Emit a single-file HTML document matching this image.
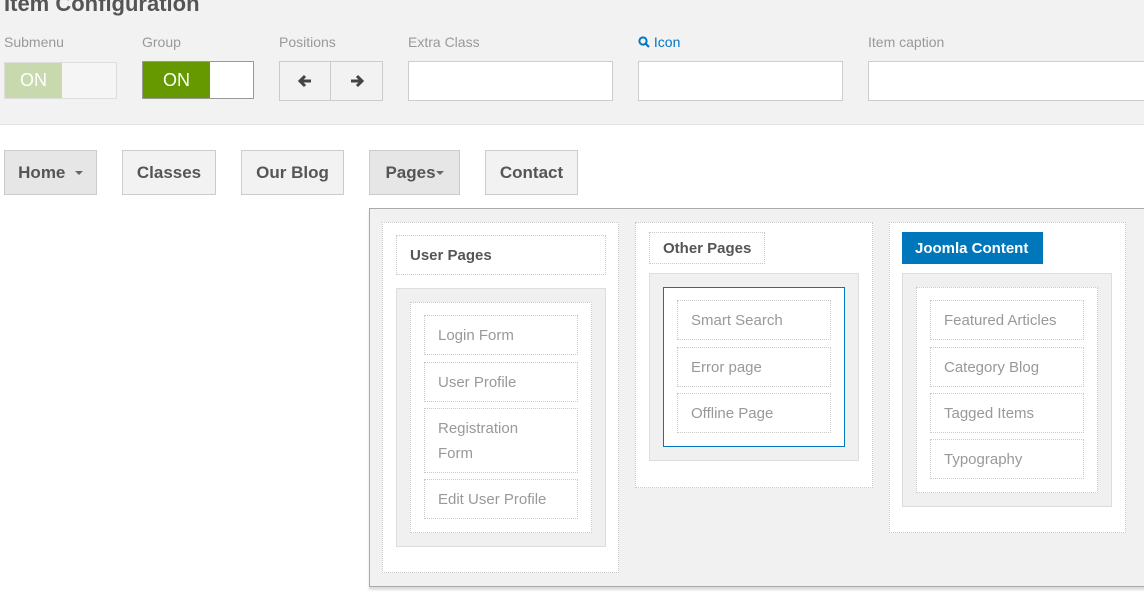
<!DOCTYPE html>
<html><head><style>
*{box-sizing:border-box;margin:0;padding:0}
body{width:1144px;height:612px;overflow:hidden;background:#fff;font-family:"Liberation Sans",Arial,sans-serif;position:relative}
.a{position:absolute}
.top{left:0;top:0;width:1144px;height:125px;background:#f2f2f2;border-bottom:1px solid #e5e5e5}
.lbl{font-size:14px;color:#999;top:34px}
.inp{background:#fff;border:1px solid #ccc;top:61px;height:40px}
.nb{top:150px;height:45px;border:1px solid #ccc;background:#f2f2f2;font-size:17px;font-weight:bold;color:#555;display:flex;align-items:center;justify-content:center}
.dot{border:1px dotted #c8c8c8;background:#fff}
.gray{background:#f0f0f0;border:1px solid #ddd}
.it{font-size:15px;color:#999;padding-left:13px;display:flex;align-items:center;line-height:25px}
.hd{font-size:15px;font-weight:bold;color:#555;padding-left:13px;display:flex;align-items:center}
.car{display:inline-block;width:0;height:0;border-left:4px solid transparent;border-right:4px solid transparent;border-top:4px solid #666;vertical-align:middle}
</style></head><body>
<div class="a top"></div>
<div class="a" style="left:4px;top:-9px;font-size:22px;font-weight:bold;color:#555">Item Configuration</div>
<div class="a lbl" style="left:4px">Submenu</div>
<div class="a lbl" style="left:142px">Group</div>
<div class="a lbl" style="left:279px">Positions</div>
<div class="a lbl" style="left:408px">Extra Class</div>
<div class="a lbl" style="left:638px;color:#0077c0"><svg width="12" height="12" viewBox="0 0 12 12" style="vertical-align:-1px"><circle cx="5" cy="5" r="3.6" fill="none" stroke="#0077c0" stroke-width="2"/><path d="M7.5 7.5L11 11" stroke="#0077c0" stroke-width="2.2"/></svg> Icon</div>
<div class="a lbl" style="left:868px">Item caption</div>
<div class="a" style="left:4px;top:62px;width:113px;height:37px;border:1px solid #ddd;background:#f5f5f5"><div style="width:57px;height:35px;background:#c8d9ad;color:#fff;font-size:18px;display:flex;align-items:center;justify-content:center">ON</div></div>
<div class="a" style="left:142px;top:61px;width:112px;height:38px;border:1px solid #999;background:#fff"><div style="width:67px;height:36px;background:#669900;color:#fff;font-size:18px;display:flex;align-items:center;justify-content:center">ON</div></div>
<div class="a" style="left:279px;top:61px;width:104px;height:40px;border:1px solid #ccc;background:#f2f2f2;display:flex">
<div style="width:51px;border-right:1px solid #ccc;display:flex;align-items:center;justify-content:center"><svg width="16" height="14" viewBox="0 0 16 14"><path d="M14 7H3M8 2L3 7l5 5" fill="none" stroke="#444" stroke-width="3"/></svg></div>
<div style="flex:1;display:flex;align-items:center;justify-content:center"><svg width="16" height="14" viewBox="0 0 16 14"><path d="M2 7h11M8 2l5 5-5 5" fill="none" stroke="#444" stroke-width="3"/></svg></div></div>
<div class="a inp" style="left:408px;width:205px"></div>
<div class="a inp" style="left:638px;width:205px"></div>
<div class="a inp" style="left:868px;width:290px"></div>

<div class="a nb" style="left:4px;width:93px;background:#e6e6e6">Home&nbsp;&nbsp;<span class="car"></span></div>
<div class="a nb" style="left:122px;width:94px">Classes</div>
<div class="a nb" style="left:241px;width:103px">Our Blog</div>
<div class="a nb" style="left:369px;width:91px;background:#e6e6e6">Pages<span class="car"></span></div>
<div class="a nb" style="left:485px;width:93px">Contact</div>

<div class="a" style="left:369px;top:208px;width:790px;height:379px;background:#f1f1f1;border:1px solid #aaa;box-shadow:0 3px 2px #ddd"></div>
<!-- col1 -->
<div class="a dot" style="left:382px;top:222px;width:237px;height:351px"></div>
<div class="a dot hd" style="left:396px;top:235px;width:210px;height:40px">User Pages</div>
<div class="a gray" style="left:396px;top:288px;width:210px;height:259px"></div>
<div class="a dot" style="left:410px;top:302px;width:182px;height:231px"></div>
<div class="a dot it" style="left:424px;top:315px;width:154px;height:40px">Login Form</div>
<div class="a dot it" style="left:424px;top:362px;width:154px;height:40px">User Profile</div>
<div class="a dot it" style="left:424px;top:408px;width:154px;height:65px">Registration<br>Form</div>
<div class="a dot it" style="left:424px;top:479px;width:154px;height:40px">Edit User Profile</div>
<!-- col2 -->
<div class="a dot" style="left:635px;top:222px;width:238px;height:266px"></div>
<div class="a dot hd" style="left:649px;top:232px;width:116px;height:32px">Other Pages</div>
<div class="a gray" style="left:649px;top:273px;width:210px;height:188px"></div>
<div class="a" style="left:663px;top:287px;width:182px;height:160px;border:1px solid #0077c0;background:#fff"></div>
<div class="a dot it" style="left:677px;top:300px;width:154px;height:40px">Smart Search</div>
<div class="a dot it" style="left:677px;top:347px;width:154px;height:40px">Error page</div>
<div class="a dot it" style="left:677px;top:393px;width:154px;height:40px">Offline Page</div>
<!-- col3 -->
<div class="a dot" style="left:889px;top:222px;width:237px;height:311px"></div>
<div class="a hd" style="left:902px;top:232px;width:141px;height:32px;background:#0077bb;color:#fff">Joomla Content</div>
<div class="a gray" style="left:902px;top:273px;width:210px;height:234px"></div>
<div class="a dot" style="left:916px;top:287px;width:182px;height:206px"></div>
<div class="a dot it" style="left:930px;top:300px;width:154px;height:40px">Featured Articles</div>
<div class="a dot it" style="left:930px;top:347px;width:154px;height:40px">Category Blog</div>
<div class="a dot it" style="left:930px;top:393px;width:154px;height:40px">Tagged Items</div>
<div class="a dot it" style="left:930px;top:439px;width:154px;height:40px">Typography</div>
</body></html>
